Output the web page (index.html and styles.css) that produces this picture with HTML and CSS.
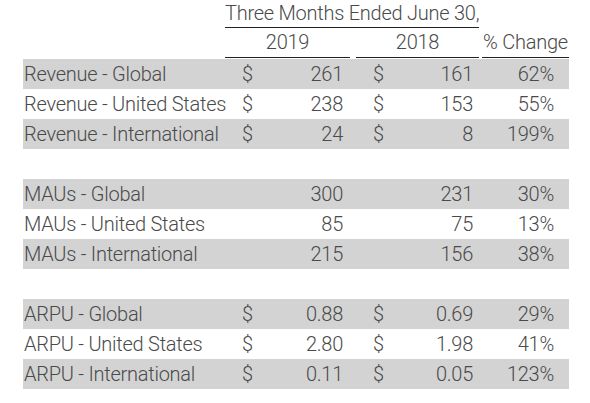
FILE: index.html
```html
<!DOCTYPE html>
<html>
<head>
<meta charset="utf-8">
<link rel="stylesheet" href="styles.css">
</head>
<body>
<div class="table">
  <div class="head1">
    <div class="span-head">Three Months Ended June 30,</div>
  </div>
  <div class="head2">
    <div class="yr yr1">2019</div>
    <div class="yr yr2">2018</div>
    <div class="yr pcth">% Change</div>
  </div>

  <div class="row shade"><div class="lbl">Revenue - Global</div><div class="cur">$</div><div class="val v1">261</div><div></div><div class="cur">$</div><div class="val v2">161</div><div></div><div class="pct">62%</div></div>
  <div class="row"><div class="lbl">Revenue - United States</div><div class="cur">$</div><div class="val v1">238</div><div></div><div class="cur">$</div><div class="val v2">153</div><div></div><div class="pct">55%</div></div>
  <div class="row shade"><div class="lbl">Revenue - International</div><div class="cur">$</div><div class="val v1">24</div><div></div><div class="cur">$</div><div class="val v2">8</div><div></div><div class="pct">199%</div></div>
  <div class="spacer"></div>
  <div class="row shade"><div class="lbl">MAUs - Global</div><div class="cur"></div><div class="val v1">300</div><div></div><div class="cur"></div><div class="val v2">231</div><div></div><div class="pct">30%</div></div>
  <div class="row"><div class="lbl">MAUs - United States</div><div class="cur"></div><div class="val v1">85</div><div></div><div class="cur"></div><div class="val v2">75</div><div></div><div class="pct">13%</div></div>
  <div class="row shade"><div class="lbl">MAUs - International</div><div class="cur"></div><div class="val v1">215</div><div></div><div class="cur"></div><div class="val v2">156</div><div></div><div class="pct">38%</div></div>
  <div class="spacer"></div>
  <div class="row shade"><div class="lbl">ARPU - Global</div><div class="cur">$</div><div class="val v1">0.88</div><div></div><div class="cur">$</div><div class="val v2">0.69</div><div></div><div class="pct">29%</div></div>
  <div class="row"><div class="lbl">ARPU - United States</div><div class="cur">$</div><div class="val v1">2.80</div><div></div><div class="cur">$</div><div class="val v2">1.98</div><div></div><div class="pct">41%</div></div>
  <div class="row shade"><div class="lbl">ARPU - International</div><div class="cur">$</div><div class="val v1">0.11</div><div></div><div class="cur">$</div><div class="val v2">0.05</div><div></div><div class="pct">123%</div></div>
</div>
</body>
</html>
```

FILE: styles.css
```css
html, body {
  margin: 0;
  padding: 0;
  background: #ffffff;
}
body {
  font-family: "Roboto", "Liberation Sans", sans-serif;
  font-weight: 300;
  font-size: 20px;
  color: #4a4a4a;
  letter-spacing: -0.25px;
}
.table {
  padding-left: 23px;
  width: 546px;
}
.head1 {
  display: grid;
  grid-template-columns: 202px 254px 90px;
  height: 28px;
}
.span-head {
  grid-column: 2;
  text-align: center;
  border-bottom: 1px solid #222;
  line-height: 26px;
  white-space: nowrap;
}
.head2 {
  display: grid;
  grid-template-columns: 202px 125px 6px 123px 3px 87px;
  height: 30px;
  margin-bottom: 1px;
}
.yr {
  text-align: center;
  border-bottom: 1px solid #222;
  line-height: 29px;
  white-space: nowrap;
}
.yr1 { grid-column: 2; }
.yr2 { grid-column: 4; }
.pcth { grid-column: 6; }
.row {
  display: grid;
  grid-template-columns: 202px 30px 95px 6px 30px 93px 3px 87px;
  height: 30px;
  line-height: 30px;
  white-space: nowrap;
}
.shade {
  background: #d3d3d3;
}
.lbl {
  padding-left: 1px;
}
.cur {
  padding-left: 17px;
}
.val {
  text-align: right;
}
.v1 { padding-right: 7px; }
.v2 { padding-right: 6px; }
.pct {
  text-align: right;
  padding-right: 15px;
}
.spacer {
  height: 30px;
}
```
